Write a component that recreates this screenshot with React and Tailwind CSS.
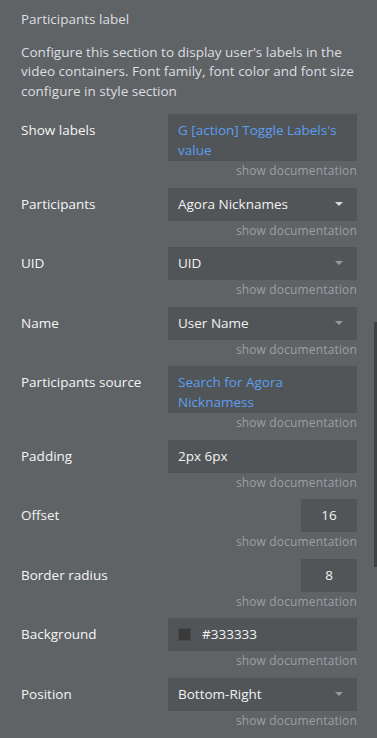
const rows = [
  { label: "Show labels", kind: "dynamic", value: "G [action] Toggle Labels's value", tall: true },
  { label: "Participants", kind: "select", value: "Agora Nicknames", active: true },
  { label: "UID", kind: "select", value: "UID" },
  { label: "Name", kind: "select", value: "User Name" },
  { label: "Participants source", kind: "dynamic", value: "Search for Agora Nicknamess", tall: true },
  { label: "Padding", kind: "text", value: "2px 6px" },
  { label: "Offset", kind: "number", value: "16" },
  { label: "Border radius", kind: "number", value: "8" },
  { label: "Background", kind: "color", value: "#333333" },
  { label: "Position", kind: "select", value: "Bottom-Right" },
];

const Caret = ({ active }) => (
  <svg width="8" height="4" viewBox="0 0 8 4" className="shrink-0">
    <path d="M0 0 L8 0 L4 4 Z" fill={active ? "#d6d8da" : "#979a9d"} />
  </svg>
);

const Field = ({ row }) => {
  if (row.kind === "number") {
    return (
      <div className="ml-auto w-[56px] h-[33px] bg-[#515558] text-center pt-[6px] leading-[20px] text-[#f2f2f2]">
        {row.value}
      </div>
    );
  }

  if (row.kind === "select") {
    return (
      <div className="h-[33px] bg-[#515558] flex items-center justify-between pl-[10px] pr-[14px] pb-[1px] text-[#f2f2f2]">
        <span className="leading-[20px]">{row.value}</span>
        <Caret active={row.active} />
      </div>
    );
  }

  if (row.kind === "color") {
    return (
      <div className="h-[33px] bg-[#515558] flex items-center pl-[10px] gap-[11px] pb-[1px] text-[#f2f2f2]">
        <span className="w-[13px] h-[13px] bg-[#3a3a3a] border border-[#484b4e]" />
        <span className="leading-[20px]">{row.value}</span>
      </div>
    );
  }

  return (
    <div
      className={
        "bg-[#515558] pl-[10px] pr-[8px] pt-[6px] leading-[20px] overflow-hidden " +
        (row.tall ? "h-[47px] " : "h-[33px] ") +
        (row.kind === "dynamic" ? "text-[#5c9ef0]" : "text-[#f2f2f2]")
      }
    >
      {row.value}
    </div>
  );
};

export default function App() {
  return (
    <div
      className="relative h-[738px] w-full overflow-hidden bg-[#5f6366] pl-[21px] pr-[20px] text-[13.5px]"
      style={{ fontFamily: '"Open Sans", "Liberation Sans", sans-serif' }}
    >
      <div className="pt-[9px] leading-[20px] text-[#dcdee0]">Participants label</div>
      <p className="mt-[13.5px] leading-[19.5px] text-[#dcdee0]">
        Configure this section to display user's labels in the video containers. Font family, font color and font size configure in style section
      </p>

      <div className="mt-[13px]">
        {rows.map((row) => (
          <div key={row.label} className="flex mb-[6.5px]">
            <div className="w-[147px] shrink-0 pt-[6px] leading-[20px] text-[#f5f5f5]">{row.label}</div>
            <div className="w-[189px] flex flex-col">
              <Field row={row} />
              <div className="h-[20px] leading-[20px] text-right text-[12px] tracking-[0.15px] text-[#9c9fa2]">
                show documentation
              </div>
            </div>
          </div>
        ))}
      </div>

      <div className="absolute right-0 top-[322px] w-[3px] h-[245px] bg-[#3f4245]" />
    </div>
  );
}
